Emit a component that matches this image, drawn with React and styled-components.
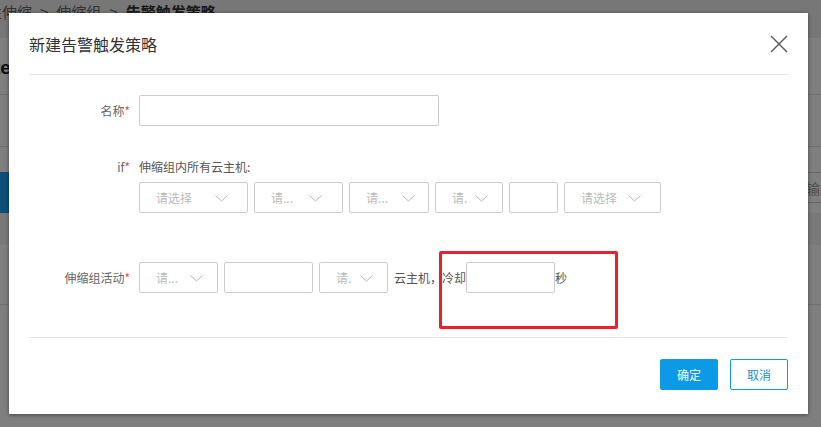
import React from 'react';
import styled, { createGlobalStyle } from 'styled-components';

const GlobalStyle = createGlobalStyle`
  html, body {
    margin: 0;
    padding: 0;
    width: 821px;
    height: 427px;
    overflow: hidden;
    background: #fff;
  }
  * { box-sizing: border-box; }
`;

const font = `"Noto Sans CJK SC", "Noto Sans", sans-serif`;

const Page = styled.div`
  position: relative;
  width: 821px;
  height: 427px;
  overflow: hidden;
  font-family: ${font};
`;

/* ---------- page behind the dialog ---------- */
const Backdrop = styled.div`
  display: flex;
  flex-direction: column;
  height: 100%;
  background: #fff;
`;

const Crumbs = styled.div`
  height: 38px;
  background: #eee;
  display: flex;
  align-items: flex-start;
  gap: 8px;
  padding-top: 2px;
  margin-left: -28px;
  font-size: 15px;
  line-height: 20px;
  color: #666;
`;

const Crumb = styled.span`
  color: ${(p) => (p.current ? '#333' : '#666')};
  font-weight: ${(p) => (p.current ? 'bold' : 'normal')};
`;

const BgRow = styled.div`
  display: flex;
  height: ${(p) => p.h}px;
  border-bottom: ${(p) => (p.line ? '1px solid #ddd' : 'none')};
  background: ${(p) => p.bg || '#fff'};
`;

const BgTitle = styled.div`
  font-family: "Liberation Sans", sans-serif;
  font-weight: bold;
  font-size: 19px;
  padding-top: 19px;
  margin-left: -6px;
  color: #222;
`;

const BgSide = styled.div`
  width: 60px;
  background: ${(p) => p.bg || 'transparent'};
`;

const BgMain = styled.div`
  flex: 1;
  display: flex;
  justify-content: flex-end;
`;

const BgInput = styled.div`
  width: 200px;
  height: 31px;
  border-top: 1px solid #ccc;
  border-bottom: 1px solid #ccc;
  font-size: 14px;
  line-height: 30px;
  color: #999;
  margin-right: -185px;
`;

const Mask = styled.div`
  position: absolute;
  inset: 0;
  background: rgba(0, 0, 0, 0.5);
`;

/* ---------- dialog ---------- */
const Modal = styled.div`
  position: absolute;
  left: 9px;
  top: 13px;
  width: 799px;
  background: #fff;
  box-shadow: 0 1px 4px rgba(0, 0, 0, 0.45);
  display: flex;
  flex-direction: column;
`;

const Header = styled.div`
  height: 62px;
  margin: 0 20px;
  border-bottom: 1px solid #e5e5e5;
  display: flex;
  align-items: center;
  justify-content: space-between;
`;

const Title = styled.div`
  font-size: 16px;
  color: #333;
`;

const Close = styled.button`
  border: 0;
  background: none;
  padding: 0;
  width: 18px;
  height: 18px;
  display: flex;
  align-items: center;
  justify-content: center;
  cursor: pointer;
`;

const Body = styled.div`
  padding: 20px 20px 44px;
  display: flex;
  flex-direction: column;
`;

const FormRow = styled.div`
  display: flex;
  align-items: ${(p) => (p.top ? 'flex-start' : 'center')};
  margin-top: ${(p) => p.gap || 0}px;
`;

const Label = styled.div`
  width: 101px;
  margin-right: 9px;
  text-align: right;
  font-size: 12px;
  line-height: 16px;
  color: #666;
  white-space: nowrap;
`;

const Star = styled.span`
  color: #f0463c;
`;

const Field = styled.div`
  display: flex;
  flex-direction: column;
  gap: 7px;
`;

const Hint = styled.div`
  font-size: 12px;
  line-height: 16px;
  color: #555;
`;

const Controls = styled.div`
  display: flex;
  align-items: center;
  gap: 6px;
`;

const Inline = styled.div`
  display: flex;
  align-items: center;
  font-size: 12px;
  color: #555;
  white-space: nowrap;
`;

const TextInput = styled.div`
  width: ${(p) => p.w}px;
  height: 31px;
  border: 1px solid #ccc;
  border-radius: 2px;
  background: #fff;
`;

const SelectBox = styled.div`
  position: relative;
  width: ${(p) => p.w}px;
  height: 31px;
  border: 1px solid #ccc;
  border-radius: 2px;
  padding-left: 16px;
  display: flex;
  align-items: center;
  font-size: 12px;
  color: #bbb;
  white-space: nowrap;
`;

const Arrow = styled.svg`
  position: absolute;
  right: ${(p) => p.r}px;
  top: 12px;
`;

const Footer = styled.div`
  margin: 0 20px;
  border-top: 1px solid #e5e5e5;
  padding: 21px 0 24px;
  display: flex;
  justify-content: flex-end;
  gap: 12px;
`;

const Button = styled.button`
  width: 58px;
  height: 31px;
  border-radius: 2px;
  border: 1px solid #0c99e6;
  background: ${(p) => (p.primary ? '#0c99e6' : '#fff')};
  color: ${(p) => (p.primary ? '#fff' : '#1a8fd8')};
  font-family: ${font};
  font-size: 12px;
  padding: 0;
  cursor: pointer;
`;

const Mark = styled.div`
  position: absolute;
  left: 430px;
  top: 238px;
  width: 179px;
  height: 78px;
  border: 3.5px solid #ec1f2b;
  border-radius: 2px;
  pointer-events: none;
`;

const Select = ({ w, text, r = 14 }) => (
  <SelectBox w={w}>
    {text}
    <Arrow r={r} width="13" height="7" viewBox="0 0 13 7">
      <polyline points="0.5,0.5 6.5,6 12.5,0.5" fill="none" stroke="#b5b5b5" strokeWidth="1" />
    </Arrow>
  </SelectBox>
);

export default function App() {
  return (
    <Page>
      <GlobalStyle />
      <Backdrop>
        <Crumbs>
          <Crumb>弹性伸缩</Crumb>
          <Crumb>&gt;</Crumb>
          <Crumb>伸缩组</Crumb>
          <Crumb>&gt;</Crumb>
          <Crumb current>告警触发策略</Crumb>
        </Crumbs>
        <BgRow h={57} line>
          <BgTitle>te</BgTitle>
        </BgRow>
        <BgRow h={52} line />
        <BgRow h={25} />
        <BgRow h={41}>
          <BgSide bg="#1a9ef2" />
          <BgMain>
            <BgInput>输入</BgInput>
          </BgMain>
        </BgRow>
        <BgRow h={32} bg="#f2f2f2" />
        <BgRow h={60} line />
      </Backdrop>
      <Mask />
      <Modal>
        <Header>
          <Title>新建告警触发策略</Title>
          <Close>
            <svg width="18" height="18" viewBox="0 0 18 18">
              <path d="M1 1 L17 17 M17 1 L1 17" stroke="#555" strokeWidth="1.4" fill="none" />
            </svg>
          </Close>
        </Header>
        <Body>
          <FormRow>
            <Label>名称<Star>*</Star></Label>
            <TextInput w={300} />
          </FormRow>
          <FormRow top gap={33}>
            <Label>if<Star>*</Star></Label>
            <Field>
              <Hint>伸缩组内所有云主机:</Hint>
              <Controls>
                <Select w={109} text="请选择" r={19} />
                <Select w={89} text="请..." r={20} />
                <Select w={80} text="请..." r={13} />
                <Select w={68} text="请." r={14} />
                <TextInput w={49} />
                <Select w={97} text="请选择" r={19} />
              </Controls>
            </Field>
          </FormRow>
          <FormRow gap={49}>
            <Label>伸缩组活动<Star>*</Star></Label>
            <Controls>
              <Select w={79} text="请..." r={14} />
              <TextInput w={89} />
              <Select w={69} text="请." r={14} />
              <Inline>
                云主机，冷却
                <TextInput w={89} />
                秒
              </Inline>
            </Controls>
          </FormRow>
        </Body>
        <Footer>
          <Button primary>确定</Button>
          <Button>取消</Button>
        </Footer>
        <Mark />
      </Modal>
    </Page>
  );
}
